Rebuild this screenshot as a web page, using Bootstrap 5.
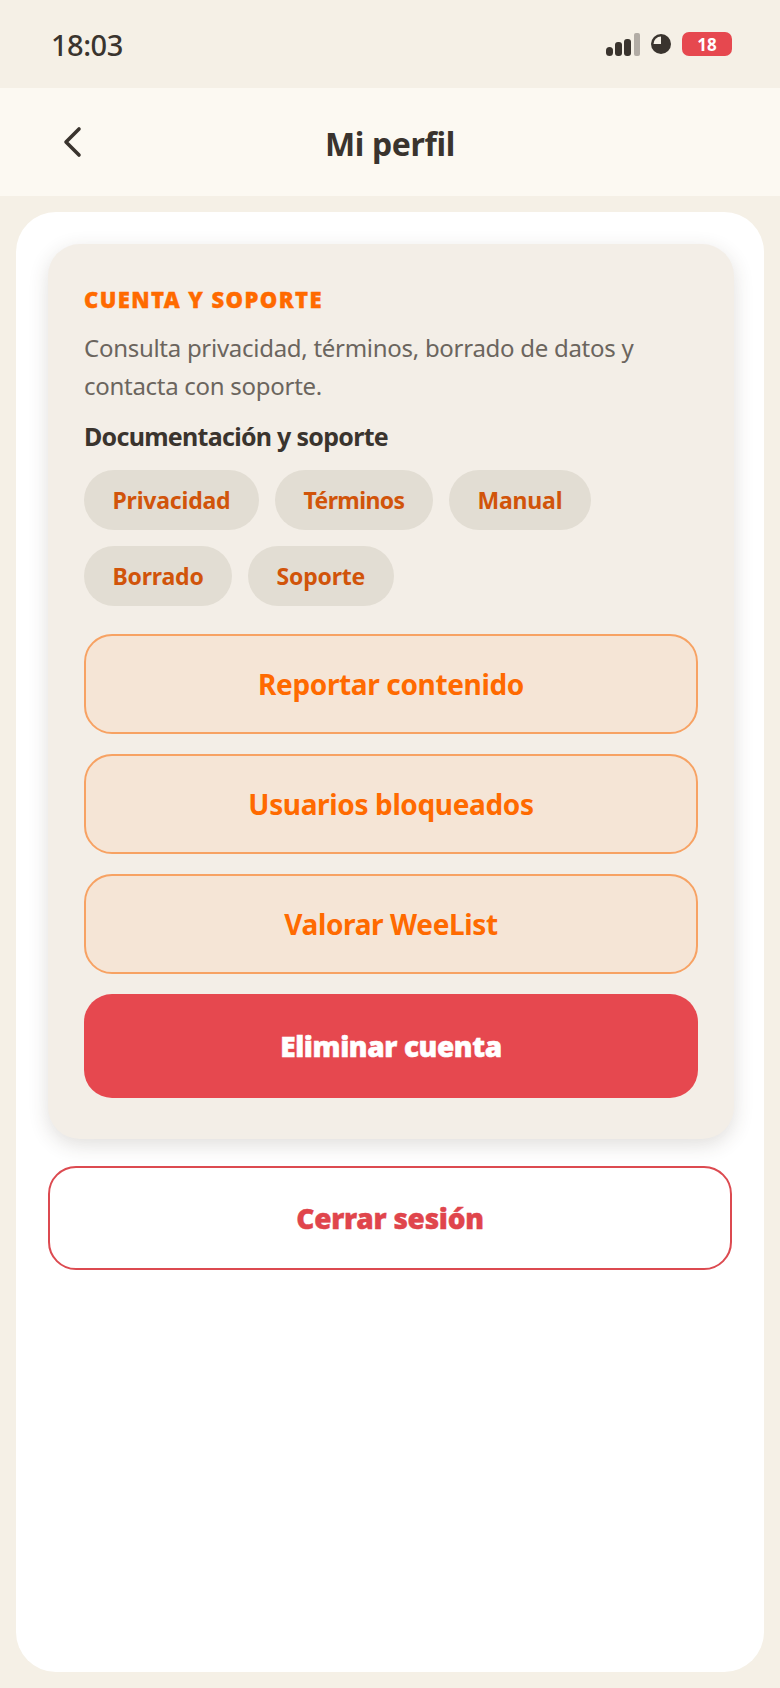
<!DOCTYPE html>
<html lang="es">
<head>
<meta charset="utf-8">
<title>Mi perfil</title>
<link rel="stylesheet" href="https://cdn.jsdelivr.net/npm/bootstrap@5.3.0/dist/css/bootstrap.min.css">
<style>
html,body{height:100%}
body{background:#f5f0e6;font-family:"Noto Sans","Open Sans",sans-serif;color:#3a342e;width:780px;height:1688px;overflow:hidden}
.stat-bar{height:88px;padding:0 48px 0 51px}
.stat-time{font-size:29px;line-height:1;letter-spacing:-.5px;font-weight:500}
.stat-icons{gap:11px}
.stat-pill{width:50px;height:24px;border-radius:7px;background:#e6484f;color:#fff;font-size:17px;font-weight:700;line-height:1}
.top-head{height:108px;background:#fcf9f2}
.back-btn{left:62px;top:38px;line-height:0}
.top-title{font-size:32px;font-weight:700;letter-spacing:-.35px;line-height:1;margin-top:4px}
.sheet{margin:16px 16px 0;height:1460px;background:#fff;border-radius:40px;padding:32px 30px 0 32px}
.panel{width:686px;height:895px;background:#f3eee7;border-radius:32px;padding:36px;box-shadow:0 6px 20px rgba(60,50,40,.16)}
.eyebrow{font-size:22px;font-weight:900;color:#ff6a00;letter-spacing:1.4px;line-height:38px;margin-bottom:11px;-webkit-text-stroke:.4px #ff6a00}
.intro{font-size:24px;line-height:38px;color:#6b655e;margin:0 0 13px;letter-spacing:-.28px}
.sub-h{font-size:25px;font-weight:700;line-height:36px;color:#3a342e;margin-bottom:16px;letter-spacing:-.72px}
.chips{gap:16px;margin-bottom:28px}
.chip{height:60px;border-radius:30px;background:#e2ddd3;color:#d1540a;font-size:23px;font-weight:700;border:0;padding:0 28.5px;letter-spacing:-.2px;line-height:1}
.chip-tight{letter-spacing:-.6px}
.act{height:100px;border-radius:28px;border:2px solid #f7a263;background:#f5e5d6;color:#ff6a00;font-size:28px;font-weight:700;width:100%;margin-bottom:20px;letter-spacing:-.36px}
.act-danger{height:104px;border:0;background:#e6484f;color:#fff;font-weight:900;font-size:28px;margin:0;letter-spacing:-.4px;-webkit-text-stroke:.5px #fff}
.logout{width:684px;height:104px;margin-top:27px;border-radius:28px;border:2px solid #dc4a50;background:#fff;color:#e0454c;font-weight:900;font-size:28px;letter-spacing:-.27px;-webkit-text-stroke:.4px #e0454c}
</style>
</head>
<body>
<div class="stat-bar d-flex align-items-center justify-content-between">
  <span class="stat-time">18:03</span>
  <div class="stat-icons d-flex align-items-center">
    <svg width="34" height="24" viewBox="0 0 34 24"><g fill="#3a342e"><rect x="0" y="15" width="7" height="9" rx="3.5"/><rect x="9" y="10" width="7" height="14" rx="3"/><rect x="18" y="7" width="7" height="17" rx="3" /></g><rect x="28" y="1" width="6" height="23" rx="2" fill="#b2aca5"/></svg>
    <svg width="20" height="20" viewBox="0 0 20 20"><circle cx="10" cy="10" r="10" fill="#3a342e"/><path d="M10 2.5A7.5 7.5 0 0 0 2.5 10H10z" fill="#f5f0e6"/></svg>
    <span class="stat-pill d-flex align-items-center justify-content-center">18</span>
  </div>
</div>
<header class="top-head position-relative d-flex align-items-center justify-content-center">
  <span class="back-btn position-absolute"><svg width="20" height="32" viewBox="0 0 20 32"><path d="M17 3 4 16l13 13" fill="none" stroke="#3a342e" stroke-width="3.6" stroke-linecap="round" stroke-linejoin="round"/></svg></span>
  <h1 class="top-title mb-0">Mi perfil</h1>
</header>
<main class="sheet">
  <section class="panel">
    <div class="eyebrow">CUENTA Y SOPORTE</div>
    <p class="intro">Consulta privacidad, términos, borrado de datos y contacta con soporte.</p>
    <div class="sub-h">Documentación y soporte</div>
    <div class="chips d-flex flex-wrap">
      <button class="chip btn">Privacidad</button>
      <button class="chip chip-tight btn">Términos</button>
      <button class="chip btn">Manual</button>
      <button class="chip btn">Borrado</button>
      <button class="chip btn">Soporte</button>
    </div>
    <button class="act btn d-block">Reportar contenido</button>
    <button class="act btn d-block">Usuarios bloqueados</button>
    <button class="act btn d-block">Valorar WeeList</button>
    <button class="act act-danger btn d-block">Eliminar cuenta</button>
  </section>
  <button class="logout btn d-block">Cerrar sesión</button>
</main>
<script src="https://cdn.jsdelivr.net/npm/bootstrap@5.3.0/dist/js/bootstrap.bundle.min.js"></script>
</body>
</html>
